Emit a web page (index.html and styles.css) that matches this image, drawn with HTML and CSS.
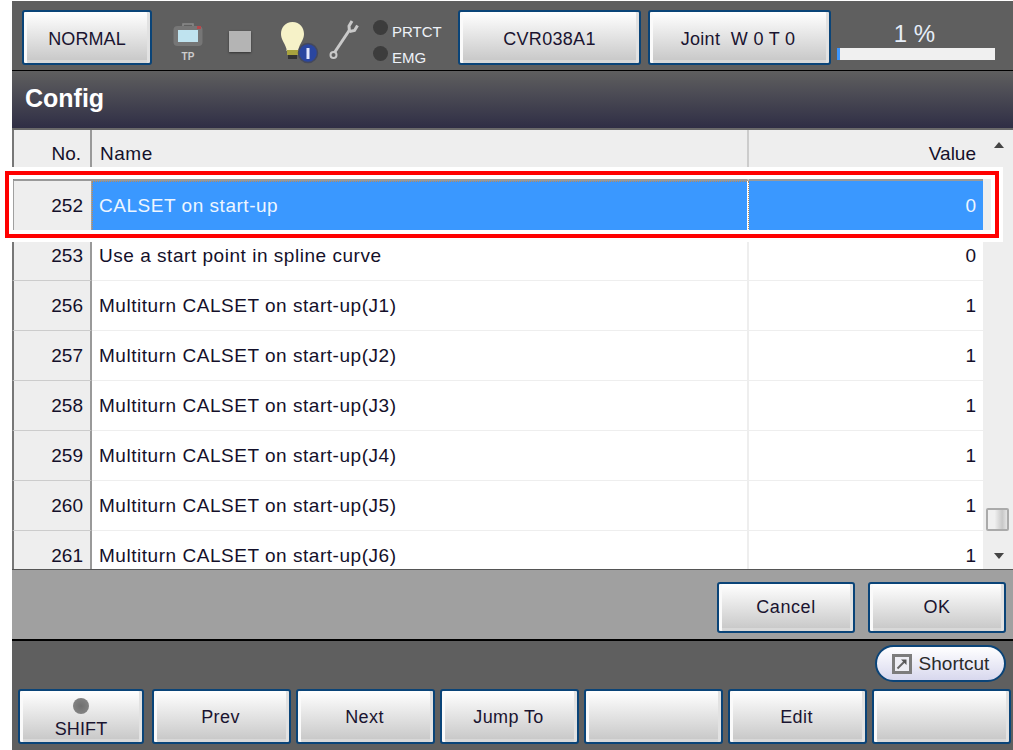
FILE: index.html
```html
<!DOCTYPE html>
<html lang="en">
<head>
<meta charset="utf-8">
<title>Config</title>
<link rel="stylesheet" href="styles.css">
</head>
<body>
<div class="app">
  <header class="topbar">
    <button class="btn btn-mode">NORMAL</button>
    <div class="status-icons">
      <div class="tp">
        <svg width="30" height="23" viewBox="0 0 30 23"><path d="M10 4V1h10v3" fill="none" stroke="#8a8a8a" stroke-width="1.5"/><rect x="0.5" y="3" width="29" height="20" rx="4" fill="#767676"/><rect x="5" y="7" width="20" height="12" fill="#bfe3ef"/><rect x="24" y="3" width="4" height="3" fill="#b5484c"/></svg>
        <span class="tp-label">TP</span>
      </div>
      <span class="stop-square"></span>
      <svg class="bulb" width="40" height="46" viewBox="0 0 40 46"><path d="M12.5 0C5 0 1 6 1 12c0 6 4 9 5.500 15v2h12v-2c1.500-6 5.500-9 5.500-15C24 6 20 0 12.500 0z" fill="#f6f2c8"/><rect x="7" y="28" width="11" height="5" fill="#a8a33e"/><rect x="8" y="33" width="9" height="4" fill="#333"/><circle cx="28" cy="31" r="9.500" fill="#2a46a0" stroke="#45495c" stroke-width="1.500"/><rect x="26.500" y="26" width="3" height="11" fill="#e3e8ff"/></svg>
      <svg class="wrench" width="30" height="42" viewBox="0 0 30 42"><path d="M5.500 33.500L20.500 11" stroke="#c9c9c9" stroke-width="3" fill="none"/><path d="M20.500 12.500L20 7l3-5M20.500 12.500l5-1 3-5" stroke="#c9c9c9" stroke-width="3" fill="none"/><circle cx="4.500" cy="36" r="3" fill="none" stroke="#c9c9c9" stroke-width="2"/></svg>
      <div class="leds">
        <div class="led-row"><span class="led"></span><span>PRTCT</span></div>
        <div class="led-row"><span class="led"></span><span>EMG</span></div>
      </div>
    </div>
    <button class="btn btn-robot">CVR038A1</button>
    <button class="btn btn-joint">Joint&nbsp; W 0 T 0</button>
    <div class="speed">
      <div class="speed-text">1 %</div>
      <div class="speed-track"><div class="speed-fill" style="width:1%"></div></div>
    </div>
  </header>
  <div class="titlebar">Config</div>
  <main class="table-wrap">
    <div class="grid">
      <div class="row head"><div class="c-no">No.</div><div class="c-name">Name</div><div class="c-val">Value</div></div>
      <div class="row selected"><div class="c-no">252</div><div class="c-name">CALSET on start-up</div><div class="c-val">0</div></div>
      <div class="row"><div class="c-no">253</div><div class="c-name">Use a start point in spline curve</div><div class="c-val">0</div></div>
      <div class="row"><div class="c-no">256</div><div class="c-name">Multiturn CALSET on start-up(J1)</div><div class="c-val">1</div></div>
      <div class="row"><div class="c-no">257</div><div class="c-name">Multiturn CALSET on start-up(J2)</div><div class="c-val">1</div></div>
      <div class="row"><div class="c-no">258</div><div class="c-name">Multiturn CALSET on start-up(J3)</div><div class="c-val">1</div></div>
      <div class="row"><div class="c-no">259</div><div class="c-name">Multiturn CALSET on start-up(J4)</div><div class="c-val">1</div></div>
      <div class="row"><div class="c-no">260</div><div class="c-name">Multiturn CALSET on start-up(J5)</div><div class="c-val">1</div></div>
      <div class="row"><div class="c-no">261</div><div class="c-name">Multiturn CALSET on start-up(J6)</div><div class="c-val">1</div></div>
    </div>
    <div class="scrollbar">
      <span class="arrow up"></span>
      <span class="thumb"></span>
      <span class="arrow down"></span>
    </div>
    <div class="highlight"></div>
  </main>
  <div class="actions">
    <button class="btn btn-action">Cancel</button>
    <button class="btn btn-action">OK</button>
  </div>
  <footer class="footer">
    <div class="shortcut-row">
      <button class="shortcut">
        <svg width="20" height="20" viewBox="0 0 20 20"><rect x="1.500" y="1.500" width="17" height="17" fill="#eeeef4" stroke="#7c7c7c" stroke-width="3"/><path d="M5.500 14.500l7-7" fill="none" stroke="#666" stroke-width="2"/><path d="M9 5.500h5.500V11z" fill="#555"/></svg>
        <span>Shortcut</span>
      </button>
    </div>
    <div class="fkeys">
      <button class="btn fkey fkey-shift"><span class="shift-led"></span><span class="shift-text">SHIFT</span></button>
      <button class="btn fkey fkey-first">Prev</button>
      <button class="btn fkey">Next</button>
      <button class="btn fkey">Jump To</button>
      <button class="btn fkey"></button>
      <button class="btn fkey">Edit</button>
      <button class="btn fkey"></button>
    </div>
  </footer>
</div>
</body>
</html>
```
FILE: styles.css
```css
* { box-sizing: border-box; }
html, body { margin: 0; padding: 0; height: 100%; background: #fff; overflow: hidden; }
body { padding: 1px 0 0 12px; font-family: "Liberation Sans", Arial, sans-serif; color: #14102a; }
.app { width: 1001px; height: 749px; display: flex; flex-direction: column; }

.btn {
  display: flex; align-items: center; justify-content: center;
  font: 18px "Liberation Sans", Arial, sans-serif; color: #1a1430; letter-spacing: 0.3px;
  border: 2px solid #0a4478; border-radius: 3px; padding: 2px 0 0;
  background: linear-gradient(#fff, #c6c6c6);
  box-shadow: inset 3px 0 0 #fafafa, inset -3px 0 0 #e2e2e2, inset 0 -3px 0 #d8d8d8;
}

.topbar {
  height: 70px; flex: none; background: #5f5f5f; border-bottom: 1px solid #000;
  display: flex; align-items: flex-start; padding: 9px 0 0 10px;
}
.btn-mode, .btn-robot, .btn-joint { padding-top: 4px; }
.btn-mode { width: 130px; height: 55px; letter-spacing: 0.1px; }
.status-icons { width: 306px; height: 55px; display: flex; align-items: flex-start; padding-left: 21px; }
.tp { width: 30px; display: flex; flex-direction: column; align-items: center; margin-top: 13px; }
.tp-label { font-size: 10px; font-weight: bold; color: #ccc; margin-top: 5px; line-height: 12px; }
.stop-square { width: 22px; height: 21px; background: #b4b4b4; margin: 21px 0 0 26px; box-shadow: 0 1px 2px #333; }
.bulb { margin: 12px 0 0 29px; }
.wrench { margin: 9px 0 0 9px; }
.leds { margin: 9px 0 0 14px; display: flex; flex-direction: column; gap: 2px; font-size: 15px; color: #eef2f8; }
.led-row { display: flex; align-items: center; gap: 4px; height: 24px; }
.led { width: 15px; height: 15px; border-radius: 50%; background: #3c3c3c; margin-top: -8px; }
.btn-robot { width: 183px; height: 55px; }
.btn-joint { width: 183px; height: 55px; margin-left: 7px; padding-right: 3px; }
.speed { width: 158px; margin-left: 6px; }
.speed-text { text-align: center; color: #e6eef8; font-size: 24px; line-height: 28px; margin-top: 10px; padding-right: 3px; }
.speed-track { height: 12px; background: #f0f0f0; }
.speed-fill { height: 100%; background: #3b96ff; min-width: 3px; }

.titlebar {
  height: 59px; flex: none; background: linear-gradient(#5f5f5f, #2f2e45);
  color: #fff; font-size: 25px; font-weight: bold; line-height: 54px; padding-left: 13px;
  border-bottom: 2px solid #6a6a6a;
}

.table-wrap { height: 440px; flex: none; display: flex; position: relative; background: #fff; border-bottom: 1px solid #555; }
.grid { width: 973px; height: 439px; overflow: hidden; border-right: 2px solid #eee; }
.row { height: 50px; display: grid; grid-template-columns: 80px 657px 1fr; font-size: 19px; line-height: 49px; }
.row > div { border-bottom: 1px solid #eee; }
.c-no { background: #eee; text-align: right; padding-right: 7px; border-left: 2px solid #777; border-right: 2px solid #999; border-bottom-color: #ccc !important; }
.c-name { padding-left: 7px; border-right: 2px solid #eee; letter-spacing: 0.53px; }
.c-val { text-align: right; padding-right: 7px; }
.head { height: 51px; line-height: 48px; }
.head > div { background: #eee; border-bottom: 2px solid #999; }
.head .c-no { border-bottom-color: #999 !important; padding-right: 9px; }
.head .c-name { border-right-color: #ccc; padding-left: 8px; }
.selected .c-no { border-left-color: #a0a0a0; border-right: 1px solid #a0a0a0; border-bottom-color: #a0a0a0 !important; padding-right: 8px; }
.selected .c-name, .selected .c-val { background: #3a98ff; color: #eef6ff; border-bottom-color: #fff; }
.selected .c-name { outline: 1px dotted #b98a5a; outline-offset: -1px; border-right-color: #fff; }

.scrollbar { flex: 1; background: #eee; position: relative; }
.arrow { position: absolute; left: 9px; width: 0; height: 0; border-left: 5.5px solid transparent; border-right: 5.5px solid transparent; }
.arrow.up { top: 12px; border-bottom: 6px solid #444; }
.arrow.down { bottom: 10px; border-top: 6px solid #444; }
.thumb { position: absolute; top: 378px; left: 1px; width: 23px; height: 23px; border: 2px solid #aaa; border-radius: 2px; background: linear-gradient(90deg, #f0f0f0 35%, #c8c8c8 75%, #e4e4e4); }

.highlight {
  position: absolute; left: -7px; top: 41px; width: 994px; height: 67px;
  border: 4px solid #f00; outline: 4px solid #fff; box-shadow: inset 0 0 0 4px #fff;
}

.actions { height: 71px; flex: none; background: #a0a0a0; border-bottom: 2px solid #000; display: flex; justify-content: flex-end; gap: 13px; padding: 12px 7px 0 0; }
.btn-action { width: 138px; height: 51px; padding: 0; letter-spacing: 0.6px; }

.footer { flex: 1; background: #5f5f5f; padding: 4px 0 0 6px; display: flex; flex-direction: column; }
.shortcut-row { display: flex; justify-content: flex-end; height: 44px; padding-right: 7px; }
.shortcut {
  width: 131px; height: 37px; border: 2px solid #0a4478; border-radius: 19px;
  background: linear-gradient(#fff, #d8d8ee); display: flex; align-items: center; justify-content: center; gap: 7px;
  font: 19px "Liberation Sans", Arial, sans-serif; color: #2a2a2a; padding: 0;
}
.fkeys { display: flex; gap: 5px; }
.fkey { width: 139px; height: 55px; flex: none; letter-spacing: 0.4px; padding-right: 2px; }
.fkey-shift { width: 126px; flex-direction: column; justify-content: flex-start; padding: 7px 0 0; letter-spacing: 0.1px; }
.fkey-first { margin-left: 3px; }
.shift-led { width: 16px; height: 16px; border-radius: 50%; background: radial-gradient(#707070, #8a8a8a); }
.shift-text { line-height: 20px; margin-top: 5px; }
```
